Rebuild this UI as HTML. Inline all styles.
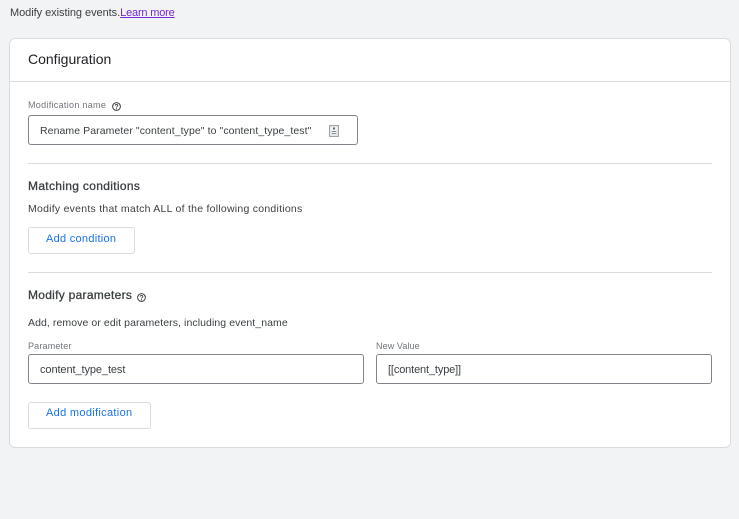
<!DOCTYPE html>
<html><head><meta charset="utf-8">
<style>
html,body{margin:0;padding:0;width:739px;height:519px;overflow:hidden;background:#f1f3f4;font-family:"Liberation Sans",sans-serif;color:#3c4043}
#w{position:absolute;left:0;top:0;width:739px;height:519px;filter:blur(.3px)}
.t{position:absolute;white-space:nowrap;line-height:14px}
.h{font-size:12px;font-weight:normal;color:#3c4043;-webkit-text-stroke:.3px #3c4043}
.b{position:absolute;box-sizing:border-box;background:#fff}
.hr{position:absolute;height:1px;background:#dadce0}
.inp{border:1px solid #80868b;border-radius:3px}
.btn{border:1px solid #dadce0;border-radius:3px}
svg{position:absolute}
</style></head>
<body>
<div id="w">
<div class="t" style="left:10px;top:6px;font-size:11px;letter-spacing:-.05px">Modify existing events.<a href="#" style="color:#7627d6;text-decoration:underline;letter-spacing:-.18px">Learn more</a></div>
<div class="b" style="left:9px;top:38px;width:722px;height:410px;border:1px solid #dadce0;border-radius:6px"></div>
<div class="t" style="left:28px;top:52px;font-size:14px;color:#202124">Configuration</div>
<div class="hr" style="left:10px;top:81px;width:720px"></div>
<div class="t" style="left:28px;top:98px;font-size:9px;color:#70757a;letter-spacing:.3px">Modification name</div>
<svg style="left:111px;top:101px" width="11" height="11" viewBox="0 0 11 11"><circle cx="5.5" cy="5.5" r="3.9" fill="none" stroke="#3c4043" stroke-width="1"/><path d="M4.2 4.6c0-1.6 2.6-1.6 2.6 0 0 .9-1.3 1-1.3 1.9" fill="none" stroke="#3c4043" stroke-width=".9"/><path d="M5 7.3h1v1H5z" fill="#3c4043"/></svg>
<div class="b inp" style="left:28px;top:115px;width:330px;height:30px"></div>
<div class="t" style="left:40px;top:124px;font-size:10.5px;letter-spacing:.08px">Rename Parameter "content_type" to "content_type_test"</div>
<svg style="left:329px;top:125px" width="10" height="12" viewBox="0 0 10 12"><rect x=".6" y=".6" width="8.8" height="10.8" fill="#f1f3f4" stroke="#9aa0a6" stroke-width="1.1"/><rect x="4" y="2.5" width="2" height="2" fill="#5f6368"/><path d="M2.6 6.5h4.8M2.6 8.6h4.8" stroke="#80868b"/></svg>
<div class="hr" style="left:28px;top:163px;width:684px"></div>
<div class="t h" style="left:28px;top:179px;letter-spacing:.32px">Matching conditions</div>
<div class="t" style="left:28px;top:202px;font-size:10.5px;letter-spacing:.25px">Modify events that match ALL of the following conditions</div>
<div class="b btn" style="left:28px;top:227px;width:107px;height:27px"></div>
<div class="t" style="left:46px;top:232px;font-size:11px;color:#1a73e8;letter-spacing:.28px">Add condition</div>
<div class="hr" style="left:28px;top:272px;width:684px"></div>
<div class="t h" style="left:28px;top:288px;letter-spacing:.28px">Modify parameters</div>
<svg style="left:136px;top:292px" width="11" height="11" viewBox="0 0 11 11"><circle cx="5.5" cy="5.5" r="3.9" fill="none" stroke="#3c4043" stroke-width="1"/><path d="M4.2 4.6c0-1.6 2.6-1.6 2.6 0 0 .9-1.3 1-1.3 1.9" fill="none" stroke="#3c4043" stroke-width=".9"/><path d="M5 7.3h1v1H5z" fill="#3c4043"/></svg>
<div class="t" style="left:28px;top:316px;font-size:10.5px;letter-spacing:.08px">Add, remove or edit parameters, including event_name</div>
<div class="t" style="left:28px;top:339px;font-size:9px;color:#70757a;letter-spacing:.17px">Parameter</div>
<div class="b inp" style="left:28px;top:354px;width:336px;height:30px"></div>
<div class="t" style="left:40px;top:363px;font-size:11px;letter-spacing:-.09px">content_type_test</div>
<div class="t" style="left:376px;top:339px;font-size:9px;color:#70757a;letter-spacing:.1px">New Value</div>
<div class="b inp" style="left:376px;top:354px;width:336px;height:30px"></div>
<div class="t" style="left:388px;top:363px;font-size:11px;letter-spacing:-.14px">[[content_type]]</div>
<div class="b btn" style="left:28px;top:402px;width:123px;height:27px"></div>
<div class="t" style="left:46px;top:406px;font-size:11px;color:#1a73e8;letter-spacing:.32px">Add modification</div>
</div>
</body></html>
